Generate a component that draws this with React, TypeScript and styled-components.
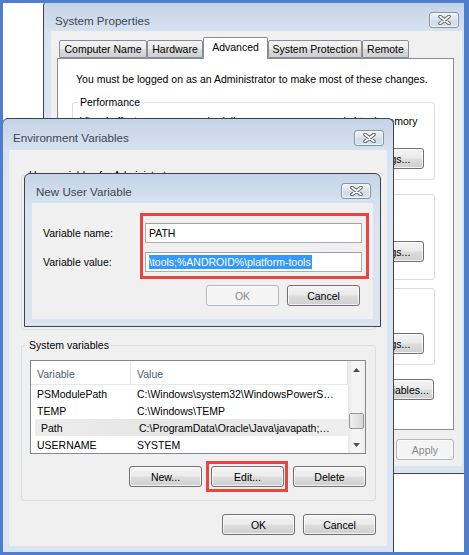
import React from "react";
import styled, { createGlobalStyle } from "styled-components";

const GlobalStyle = createGlobalStyle`
  html, body {
    margin: 0;
    padding: 0;
    background: #ffffff;
  }
  body {
    font-family: "Liberation Sans", Arial, sans-serif;
    font-size: 10.5px;
    color: #000;
  }
  * {
    box-sizing: border-box;
  }
`;

// page coordinates are measured from the screenshot's top-left corner;
// the desktop border is 3px on the left/top so children subtract it.
const EDGE = 3;

const Desktop = styled.div`
  position: relative;
  width: 469px;
  height: 555px;
  background: #ffffff;
  border: solid #4f7ecf;
  border-width: 3px 5px 3px 3px;
  overflow: hidden;
`;

type WinProps = { $x: number; $y: number; $w: number; $h: number; $z: number; $frame: number };

const Window = styled.div<WinProps>`
  position: absolute;
  left: ${(p) => p.$x - EDGE}px;
  top: ${(p) => p.$y - EDGE}px;
  width: ${(p) => p.$w}px;
  height: ${(p) => p.$h}px;
  z-index: ${(p) => p.$z};
  display: flex;
  flex-direction: column;
  border: 1px solid #3f4246;
  border-radius: 6px 6px 0 0;
  background: linear-gradient(#c4d3e7 0px, #d6e2f0 30px, #dbe5f1 60px);
  padding: 0 ${(p) => p.$frame}px ${(p) => p.$frame}px;
`;

const TitleBar = styled.div<{ $h: number; $pt: number; $pl: number; $pr: number }>`
  flex-shrink: 0;
  height: ${(p) => p.$h}px;
  padding: ${(p) => p.$pt}px ${(p) => p.$pr}px 0 ${(p) => p.$pl}px;
  display: flex;
  align-items: center;
  justify-content: space-between;
`;

const Title = styled.span`
  font-size: 11.6px;
  color: #404650;
  white-space: nowrap;
`;

const CloseBox = styled.div`
  width: 30px;
  height: 16px;
  border: 1px solid #8794a8;
  border-radius: 3px;
  background: linear-gradient(#eef2f7, #dde4ee 50%, #d2dae6 51%, #dbe2ec);
  box-shadow: inset 0 0 0 1px rgba(255, 255, 255, 0.6);
  display: flex;
  align-items: center;
  justify-content: center;
`;

const Client = styled.div`
  flex: 1;
  background: #f0f0f0;
  display: flex;
  flex-direction: column;
  min-height: 0;
`;

const Row = styled.div<{ $mt?: number; $pr?: number; $gap?: number }>`
  display: flex;
  align-items: center;
  justify-content: flex-end;
  margin-top: ${(p) => p.$mt || 0}px;
  padding-right: ${(p) => p.$pr || 0}px;
  gap: ${(p) => p.$gap ?? 9}px;
  flex-shrink: 0;
`;

const Button = styled.div<{ $w: number; $disabled?: boolean }>`
  width: ${(p) => p.$w}px;
  height: 21px;
  flex-shrink: 0;
  border: 1px solid ${(p) => (p.$disabled ? "#b4b8bc" : "#707070")};
  border-radius: 3px;
  background: ${(p) =>
    p.$disabled
      ? "#f4f4f4"
      : "linear-gradient(#f3f3f3 0%, #ebebeb 48%, #dddddd 52%, #cfcfcf 100%)"};
  box-shadow: inset 0 0 0 1px ${(p) => (p.$disabled ? "#f9f9f9" : "rgba(255,255,255,0.75)")};
  color: ${(p) => (p.$disabled ? "#8a8a8a" : "#000")};
  display: flex;
  align-items: center;
  justify-content: center;
  white-space: nowrap;
`;

/* ---------- System Properties ---------- */

const TabStrip = styled.div`
  display: flex;
  align-items: flex-end;
  height: 20px;
  margin: 7px 0 0 8px;
  position: relative;
  z-index: 1;
`;

const Tab = styled.div<{ $w: number; $active?: boolean }>`
  width: ${(p) => p.$w}px;
  height: ${(p) => (p.$active ? 22 : 18)}px;
  margin-bottom: ${(p) => (p.$active ? -1 : 0)}px;
  border: 1px solid #898c95;
  border-bottom: ${(p) => (p.$active ? "none" : "1px solid #898c95")};
  border-radius: 2px 2px 0 0;
  background: ${(p) => (p.$active ? "#ffffff" : "linear-gradient(#f3f3f3, #ebebeb 50%, #dddddd 51%, #cfcfcf)")};
  display: flex;
  align-items: center;
  justify-content: center;
  padding-bottom: ${(p) => (p.$active ? 3 : 0)}px;
  white-space: nowrap;
`;

const TabPanel = styled.div`
  height: 372px;
  margin: 0 8px 0 6px;
  background: #ffffff;
  border: 1px solid #898c95;
  display: flex;
  flex-direction: column;
  align-items: stretch;
  flex-shrink: 0;
`;

const Note = styled.div`
  height: 13px;
  line-height: 13px;
  margin: 14px 0 0 18px;
  white-space: nowrap;
`;

const Group = styled.fieldset<{ $mt: number; $ml: number; $mr: number; $h?: number; $bg: string }>`
  margin: ${(p) => p.$mt}px ${(p) => p.$mr}px 0 ${(p) => p.$ml}px;
  padding: 0;
  border: 1px solid #d5dfe5;
  border-radius: 3px;
  min-width: 0;
  flex-shrink: 0;
  ${(p) => (p.$h ? `height: ${p.$h}px;` : "")}
  overflow: hidden;
  legend {
    margin-left: 5px;
    padding: 0 2px;
    line-height: 13px;
    height: 13px;
    background: ${(p) => p.$bg};
  }
`;

const GroupBody = styled.div<{ $pt: number; $pr: number; $pb: number; $pl: number }>`
  display: flex;
  flex-direction: column;
  padding: ${(p) => p.$pt}px ${(p) => p.$pr}px ${(p) => p.$pb}px ${(p) => p.$pl}px;
`;

const GroupText = styled.div`
  height: 13px;
  line-height: 13px;
  white-space: nowrap;
`;

const ButtonRight = styled.div<{ $mt: number; $mr?: number }>`
  display: flex;
  justify-content: flex-end;
  margin-top: ${(p) => p.$mt}px;
  margin-right: ${(p) => p.$mr || 0}px;
`;

/* ---------- list view ---------- */

const ListView = styled.div<{ $h: number }>`
  height: ${(p) => p.$h}px;
  border: 1px solid #828790;
  background: #ffffff;
  display: flex;
  flex-shrink: 0;
`;

const ListMain = styled.div`
  flex: 1;
  display: flex;
  flex-direction: column;
  min-width: 0;
  overflow: hidden;
`;

const HeaderRow = styled.div`
  height: 24px;
  display: flex;
  border-bottom: 1px solid #e5e8ed;
  color: #4c5a70;
  flex-shrink: 0;
`;

const HeaderCell = styled.div<{ $w?: number }>`
  ${(p) => (p.$w ? `width: ${p.$w}px;` : "flex: 1;")}
  padding: 2px 0 0 6px;
  display: flex;
  align-items: center;
  border-right: 1px solid #e3e6eb;
`;

const DataRow = styled.div<{ $hot?: boolean }>`
  height: 17px;
  display: flex;
  align-items: center;
  margin: 0 0 0 ${(p) => (p.$hot ? 4 : 0)}px;
  background: ${(p) => (p.$hot ? "linear-gradient(90deg, #ececec, #e6e6e6 40%, #eeeeee)" : "transparent")};
  flex-shrink: 0;
  white-space: nowrap;
`;

const Cell = styled.div<{ $w?: number; $pl: number }>`
  ${(p) => (p.$w ? `width: ${p.$w}px;` : "flex: 1;")}
  padding-left: ${(p) => p.$pl}px;
  overflow: hidden;
`;

const ScrollBar = styled.div`
  width: 17px;
  flex-shrink: 0;
  background: linear-gradient(90deg, #e9e9e9, #f5f5f5 30%, #f5f5f5 70%, #ececec);
  display: flex;
  flex-direction: column;
  align-items: center;
  justify-content: space-between;
`;

const ScrollArrow = styled.div`
  width: 15px;
  height: 17px;
  display: flex;
  align-items: center;
  justify-content: center;
`;

const ScrollTrack = styled.div`
  flex: 1;
  width: 15px;
  display: flex;
  flex-direction: column;
  justify-content: flex-end;
  padding-bottom: 7px;
`;

const Thumb = styled.div`
  height: 16px;
  width: 15px;
  border: 1px solid #979797;
  border-radius: 2px;
  background: linear-gradient(90deg, #f0f0f0, #e4e4e4 50%, #d6d6d6);
`;

/* ---------- New User Variable ---------- */

const Field = styled.div<{ $mt: number }>`
  display: flex;
  align-items: center;
  margin-top: ${(p) => p.$mt}px;
  padding: 0 11px;
  flex-shrink: 0;
`;

const FieldLabel = styled.div`
  width: 102px;
  white-space: nowrap;
`;

const TextBox = styled.div`
  flex: 1;
  height: 20px;
  border: 1px solid #abadb3;
  border-top-color: #a0a3aa;
  background: #ffffff;
  display: flex;
  align-items: center;
  padding-left: 3px;
  white-space: nowrap;
  overflow: hidden;
`;

const Selected = styled.span`
  background: #3399ff;
  color: #ffffff;
  line-height: 14px;
  padding: 0 1px 0 0;
`;

const Highlight = styled.div<{ $x: number; $y: number; $w: number; $h: number }>`
  position: absolute;
  left: ${(p) => p.$x - EDGE}px;
  top: ${(p) => p.$y - EDGE}px;
  width: ${(p) => p.$w}px;
  height: ${(p) => p.$h}px;
  border: 3px solid #e8463f;
  z-index: 10;
  pointer-events: none;
`;

const CloseIcon: React.FC = () => (
  <svg width="13" height="10" viewBox="0 0 13 10">
    <path d="M2 1.5 L11 8.5 M11 1.5 L2 8.5" stroke="#5d636b" strokeWidth="3.6" strokeLinecap="round" />
    <path d="M2 1.5 L11 8.5 M11 1.5 L2 8.5" stroke="#ffffff" strokeWidth="1.6" strokeLinecap="round" />
  </svg>
);

const ArrowUp: React.FC = () => (
  <svg width="7" height="4" viewBox="0 0 7 4">
    <path d="M0 4 L3.5 0 L7 4 Z" fill="#4d4d4d" />
  </svg>
);

const ArrowDown: React.FC = () => (
  <svg width="7" height="4" viewBox="0 0 7 4">
    <path d="M0 0 L3.5 4 L7 0 Z" fill="#4d4d4d" />
  </svg>
);

const tabs = [
  { label: "Computer Name", w: 88 },
  { label: "Hardware", w: 56 },
  { label: "Advanced", w: 65, active: true },
  { label: "System Protection", w: 94 },
  { label: "Remote", w: 47 },
];

const systemVars = [
  { name: "PSModulePath", value: "C:\\Windows\\system32\\WindowsPowerS…" },
  { name: "TEMP", value: "C:\\Windows\\TEMP" },
  { name: "Path", value: "C:\\ProgramData\\Oracle\\Java\\javapath;…", hot: true },
  { name: "USERNAME", value: "SYSTEM" },
];

// the lower two group boxes sit behind the Environment Variables window,
// only their right-hand Settings buttons peek out
const SystemProperties: React.FC = () => (
  <Window $x={43} $y={0} $w={427} $h={474} $z={1} $frame={7}>
    <TitleBar $h={30} $pt={8} $pl={4} $pr={3}>
      <Title>System Properties</Title>
      <CloseBox>
        <CloseIcon />
      </CloseBox>
    </TitleBar>
    <Client>
      <TabStrip>
        {tabs.map((t) => (
          <Tab key={t.label} $w={t.w} $active={t.active}>
            {t.label}
          </Tab>
        ))}
      </TabStrip>
      <TabPanel>
        <Note>You must be logged on as an Administrator to make most of these changes.</Note>
        <Group $mt={10} $ml={14} $mr={18} $bg="#ffffff">
          <legend>Performance</legend>
          <GroupBody $pt={6} $pr={10} $pb={10} $pl={7}>
            <GroupText>Visual effects, processor scheduling, memory usage, and virtual memory</GroupText>
            <ButtonRight $mt={20}>
              <Button $w={74}>Settings...</Button>
            </ButtonRight>
          </GroupBody>
        </Group>
        <Group $mt={14} $ml={14} $mr={18} $bg="#ffffff">
          <GroupBody $pt={46} $pr={10} $pb={17} $pl={7}>
            <ButtonRight $mt={0}>
              <Button $w={74}>Settings...</Button>
            </ButtonRight>
          </GroupBody>
        </Group>
        <Group $mt={8} $ml={14} $mr={18} $bg="#ffffff">
          <GroupBody $pt={44} $pr={10} $pb={10} $pl={7}>
            <ButtonRight $mt={0}>
              <Button $w={74}>Settings...</Button>
            </ButtonRight>
          </GroupBody>
        </Group>
        <ButtonRight $mt={14} $mr={19}>
          <Button $w={124}>Environment Variables...</Button>
        </ButtonRight>
      </TabPanel>
      <Row $mt={9} $pr={8} $gap={6}>
        <Button $w={58} $disabled>
          Apply
        </Button>
      </Row>
    </Client>
  </Window>
);

const EnvironmentVariables: React.FC = () => (
  <Window $x={2} $y={118} $w={392} $h={435} $z={2} $frame={6}>
    <TitleBar $h={31} $pt={6} $pl={4} $pr={3}>
      <Title>Environment Variables</Title>
      <CloseBox>
        <CloseIcon />
      </CloseBox>
    </TitleBar>
    <Client>
      <Group $mt={19} $ml={12} $mr={11} $h={161} $bg="#f0f0f0">
        <legend>User variables for Administrator</legend>
      </Group>
      <Group $mt={9} $ml={12} $mr={11} $bg="#f0f0f0">
        <legend>System variables</legend>
        <GroupBody $pt={8} $pr={9} $pb={13} $pl={8}>
          <ListView $h={94}>
            <ListMain>
              <HeaderRow>
                <HeaderCell $w={100}>Variable</HeaderCell>
                <HeaderCell>Value</HeaderCell>
              </HeaderRow>
              {systemVars.map((v) => (
                <DataRow key={v.name} $hot={v.hot}>
                  <Cell $w={v.hot ? 96 : 100} $pl={6}>
                    {v.name}
                  </Cell>
                  <Cell $pl={v.hot ? 8 : 6}>{v.value}</Cell>
                </DataRow>
              ))}
            </ListMain>
            <ScrollBar>
              <ScrollArrow>
                <ArrowUp />
              </ScrollArrow>
              <ScrollTrack>
                <Thumb />
              </ScrollTrack>
              <ScrollArrow>
                <ArrowDown />
              </ScrollArrow>
            </ScrollBar>
          </ListView>
          <Row $mt={12} $gap={9}>
            <Button $w={73}>New...</Button>
            <Button $w={73}>Edit...</Button>
            <Button $w={73}>Delete</Button>
          </Row>
        </GroupBody>
      </Group>
      <Row $mt={13} $pr={11} $gap={8}>
        <Button $w={73}>OK</Button>
        <Button $w={73}>Cancel</Button>
      </Row>
    </Client>
  </Window>
);

const NewUserVariable: React.FC = () => (
  <Window $x={24} $y={173} $w={357} $h={154} $z={3} $frame={7}>
    <TitleBar $h={29} $pt={5} $pl={4} $pr={2}>
      <Title>New User Variable</Title>
      <CloseBox>
        <CloseIcon />
      </CloseBox>
    </TitleBar>
    <Client>
      <Field $mt={20}>
        <FieldLabel>Variable name:</FieldLabel>
        <TextBox>PATH</TextBox>
      </Field>
      <Field $mt={9}>
        <FieldLabel>Variable value:</FieldLabel>
        <TextBox>
          <Selected>\tools;%ANDROID%\platform-tools</Selected>
        </TextBox>
      </Field>
      <Row $mt={13} $pr={13} $gap={8}>
        <Button $w={73} $disabled>
          OK
        </Button>
        <Button $w={73}>Cancel</Button>
      </Row>
    </Client>
  </Window>
);

const App: React.FC = () => (
  <>
    <GlobalStyle />
    <Desktop>
      <SystemProperties />
      <EnvironmentVariables />
      <NewUserVariable />
      <Highlight $x={140} $y={213} $w={229} $h={66} />
      <Highlight $x={206} $y={461} $w={82} $h={31} />
    </Desktop>
  </>
);

export default App;
